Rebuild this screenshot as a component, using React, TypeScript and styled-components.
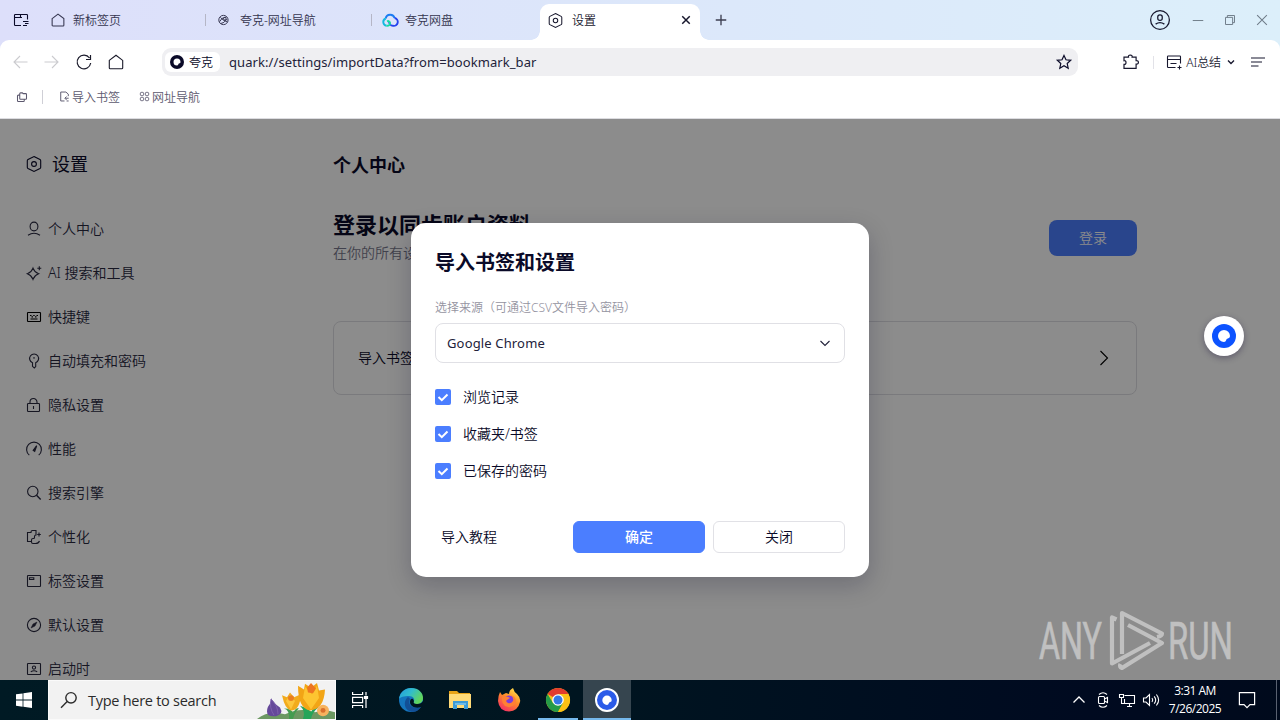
import React from 'react'
import styled, { createGlobalStyle } from 'styled-components'

const ui = `"Noto Sans", "Noto Sans CJK SC", sans-serif`
const ink = '#0a0a28'

const GlobalStyles = createGlobalStyle`
  * {
    box-sizing: border-box;
  }
  body {
    margin: 0;
    overflow: hidden;
    font-family: ${ui};
    font-weight: 350;
    color: ${ink};
  }
  button {
    font-family: inherit;
    font-weight: inherit;
    color: inherit;
    padding: 0;
    border: 0;
    background: none;
  }
  svg {
    display: block;
    flex: none;
  }
`

/* ---------- icons ---------- */

const Svg = styled.svg<{ $size?: number; $weight?: number }>`
  width: ${p => p.$size || 16}px;
  height: ${p => p.$size || 16}px;
  fill: none;
  stroke: currentColor;
  stroke-width: ${p => p.$weight || 1.1};
  overflow: visible;
`

type IconProps = { size?: number; weight?: number; children?: React.ReactNode }

const Icon = ({ size, weight, children }: IconProps) => (
  <Svg viewBox="0 0 16 16" $size={size} $weight={weight}>
    {children}
  </Svg>
)

const HexIcon = ({ size, weight }: IconProps) => (
  <Icon size={size} weight={weight}>
    <path d="M8 .5 14 3.600Q14.700 4 14.700 4.800V11.200Q14.700 12 14 12.400L8 15.500 2 12.400Q1.300 12 1.300 11.200V4.800Q1.300 4 2 3.600Z" />
    <circle cx="8" cy="8" r="2.400" />
  </Icon>
)

const HomeIcon = ({ size, weight }: IconProps) => (
  <Icon size={size} weight={weight}>
    <path d="M1.300 6.400 8 1.200l6.700 5.200v7.500q0 .9-.9.9H2.200q-.9 0-.9-.9Z" />
  </Icon>
)

const QuarkMark = ({ size = 14, color = ink }: { size?: number; color?: string }) => (
  <Svg viewBox="0 0 24 24" $size={size}>
    <circle cx="12" cy="12" r="12" fill={color} stroke="none" />
    <path
      d="M12 6a6 6 0 1 0 0 12q1.800 0 2-1.400.2-2.200 2.400-2.400Q18 14 18 12A6 6 0 0 0 12 6Z"
      fill="#fff"
      stroke="none"
    />
  </Svg>
)

const sideIcons: Record<string, React.ReactNode> = {
  user: (
    <>
      <ellipse cx="8" cy="5.500" rx="3.900" ry="4.400" />
      <path d="M2 14.300q6-4 12 0" />
    </>
  ),
  sparkle: (
    <>
      <path d="M7 3.100Q8.500 7.200 12.600 8.700 8.500 10.200 7 14.300 5.500 10.200 1.400 8.700 5.500 7.200 7 3.100Z" />
      <path d="M13.300 1.200v4M11.300 3.200h4" />
    </>
  ),
  keyboard: (
    <>
      <rect x="1.500" y="3.500" width="13" height="9" rx=".6" stroke="#000" />
      <path d="M4 6.500h1.500M7.200 6.500h1.500M10.500 6.500H12M5.500 7.900H7M9 7.900h1.500M4.500 10h7" stroke="#000" />
    </>
  ),
  key: (
    <>
      <path d="M6.500 9.700A4.500 4.500 0 1 1 9.700 9.700V13.600L8.300 15 6.500 13.300Z" />
      <path d="M8 4v1.800" />
    </>
  ),
  lock: (
    <>
      <rect x="1.500" y="6.500" width="12" height="8" rx=".8" />
      <path d="M4 6.500V5a3.500 3.500 0 0 1 7 0v1.500M7.500 9v3" />
    </>
  ),
  gauge: (
    <>
      <path d="M3.300 14.200A7.400 7.400 0 1 1 12.700 14.200" />
      <path d="m10.700 4.700-3.500 4.600 1.500 1Z" fill="currentColor" />
    </>
  ),
  search: (
    <>
      <circle cx="6.800" cy="6.500" r="5.200" />
      <path d="m10.500 10.300 4.200 4.200" strokeWidth="1.400" />
    </>
  ),
  theme: (
    <>
      <path d="M5.500 12.500h-4v-9h3.500V3q0-1.500 1.500-1.500h3.500v4.500q-1.500 0-1.500 1.500v1q0 1-1 1H7q-1.500 0-1.500 1.500v2q0 1.500 1.500 1.500h2.500q3 0 4-2.500" />
      <path d="M13 3.500v4M11.200 5.500h3.600" />
    </>
  ),
  tab: (
    <>
      <rect x="1.500" y="2.500" width="13" height="11" rx=".6" />
      <path d="M3.500 4.700h4.300v1.800H3.500z" />
    </>
  ),
  compass: (
    <>
      <circle cx="8" cy="8" r="6.600" />
      <path d="m11 5-2 4-4 2 2-4Z" fill="currentColor" strokeWidth=".5" />
    </>
  ),
  startup: (
    <>
      <rect x="1.500" y="2.500" width="13" height="11" rx=".6" />
      <circle cx="8" cy="6.600" r="1.600" />
      <path d="M4.800 10.800q3.200-2 6.400 0" />
    </>
  )
}

const CloudIcon = () => (
  <Svg viewBox="0 0 16 16" $size={16} $weight={1.9}>
    <path d="M3.700 6.500A4.600 4.600 0 0 1 12.600 6" stroke="#1c7cf2" />
    <path d="M12.600 6A3.900 3.900 0 0 1 11 13.800Q7.500 13.600 7 9.500" stroke="#2444ee" />
    <path d="M3.700 6.500A3.800 3.800 0 0 0 4.500 13.800" stroke="#14b9dd" />
    <path d="M4.500 13.800Q8.300 14 8 10.800 7.300 8.400 5 9.300" stroke="#16dca0" />
  </Svg>
)

/* ---------- browser chrome ---------- */

const Screen = styled.div`
  width: 1280px;
  height: 720px;
  display: flex;
  flex-direction: column;
  overflow: hidden;
`

// keeps CJK text optically centred next to its icon
const Label = styled.span`
  padding-bottom: 2px;
`

const ChromeTop = styled.header`
  background: linear-gradient(90deg, #dddffa 0%, #dce6fa 45%, #dceffa 100%);
`

const TabStrip = styled.div`
  height: 40px;
  display: flex;
  align-items: center;
  padding-right: 12px;
`

const TabsButton = styled.button`
  width: 41px;
  padding-left: 13px;
`

const Tab = styled.div<{ $width: number; $gap?: number }>`
  width: ${p => p.$width}px;
  height: 24px;
  display: flex;
  align-items: center;
  gap: ${p => p.$gap || 9}px;
  padding-left: 10px;
  font-size: 12px;
  color: #34344e;
`

const TabRule = styled.i`
  width: 1px;
  height: 12px;
  background: #b5b6c6;
`

const ActiveTab = styled.div`
  position: relative;
  align-self: flex-end;
  width: 160px;
  height: 36px;
  display: flex;
  align-items: center;
  padding: 0 9px 4px 8px;
  border-radius: 9px 9px 0 0;
  background: #fff;
  font-size: 12px;
  color: #16162c;

  &::before,
  &::after {
    content: '';
    position: absolute;
    bottom: 0;
    width: 9px;
    height: 9px;
  }
  &::before {
    left: -9px;
    background: radial-gradient(circle at 0 0, transparent 8.5px, #fff 9px);
  }
  &::after {
    right: -9px;
    background: radial-gradient(circle at 100% 0, transparent 8.5px, #fff 9px);
  }
  span {
    flex: 1;
    padding-left: 9px;
  }
`

const NewTab = styled.button`
  margin-left: 15px;
  color: #3c3e50;
`

const WindowControls = styled.div`
  margin-left: auto;
  display: flex;
  align-items: center;
  gap: 20px;
  color: #6f7c89;
`

const Profile = styled.div`
  color: #17172e;
  margin-right: 2px;
`

const Toolbar = styled.div`
  height: 44px;
  display: flex;
  align-items: center;
  padding: 0 14px 0 12px;
  background: #fff;
  border-radius: 9px 9px 0 0;
`

const NavButtons = styled.nav`
  width: 150px;
  display: flex;
  gap: 16px;
`

const NavButton = styled.button<{ $disabled?: boolean }>`
  color: ${p => (p.$disabled ? '#cbcbcf' : '#1a1a2a')};
`

const Omnibox = styled.div`
  width: 916px;
  height: 28px;
  display: flex;
  align-items: center;
  padding: 0 6px 0 3px;
  border-radius: 9px;
  background: #efeff2;
`

const SiteChip = styled.div`
  width: 55px;
  height: 20px;
  display: flex;
  align-items: center;
  gap: 5px;
  padding-left: 5px;
  border-radius: 6px;
  background: #fff;
  font-size: 12px;
`

const Url = styled.span`
  flex: 1;
  padding-left: 9px;
  font-size: 13px;
  font-weight: 400;
  letter-spacing: 0.08px;
  color: #22223a;
`

const Actions = styled.div`
  margin-left: auto;
  display: flex;
  align-items: center;
  color: #17172e;
`

const ToolRule = styled.i`
  width: 1px;
  height: 13px;
  margin: 0 12px 0 14px;
  background: #e2e2e8;
`

const Summary = styled.button`
  display: flex;
  align-items: center;
  gap: 4px;
  margin-right: 13px;
  font-size: 12px;
  letter-spacing: -0.1px;
`

const BookmarkBar = styled.div`
  height: 35px;
  display: flex;
  align-items: center;
  padding: 0 16px 9px;
  background: #fff;
  border-bottom: 1px solid #dcdce0;
  font-size: 12px;
  color: #5c586e;
`

const BookmarkRule = styled.i`
  width: 1px;
  height: 14px;
  margin: 0 16px 0 14px;
  background: #cfcfd6;
`

const Bookmark = styled.a`
  display: flex;
  align-items: center;
  gap: 2px;
  margin-right: 19px;
`

/* ---------- settings page ---------- */

const Page = styled.div`
  position: relative;
  flex: 1;
  min-height: 0;
  display: flex;
  background: #fff;
`

const Sidebar = styled.aside`
  width: 333px;
  padding: 30px 0 0 26px;
`

const SidebarTitle = styled.h1`
  height: 30px;
  margin: 0 0 28px;
  display: flex;
  align-items: center;
  gap: 10px;
  font-size: 18px;
  font-weight: 400;
`

const SideItem = styled.div`
  height: 44px;
  display: flex;
  align-items: center;
  gap: 6px;
  font-size: 14px;
  color: #28283f;
`

const Main = styled.main`
  width: 804px;
  padding-top: 34px;
`

const Heading = styled.h2`
  margin: 0;
  font-size: 18px;
  line-height: 25px;
  font-weight: 700;
`

const Account = styled.section`
  height: 62px;
  margin-top: 32px;
  display: flex;
  justify-content: space-between;
`

const AccountTitle = styled.h3`
  margin: 0;
  font-size: 22px;
  line-height: 28px;
  font-weight: 700;
`

const AccountHint = styled.p`
  margin: 5px 0 0;
  font-size: 14px;
  line-height: 20px;
  color: #77778c;
`

const LoginButton = styled.button`
  width: 88px;
  height: 36px;
  margin-top: 10px;
  padding-bottom: 2px;
  border-radius: 8px;
  background: #4b7eff;
  color: #fff;
  font-size: 14px;
`

const Card = styled.div`
  height: 74px;
  margin-top: 49px;
  display: flex;
  align-items: center;
  justify-content: space-between;
  padding: 0 24px;
  border: 1px solid #dfdfe4;
  border-radius: 8px;
  font-size: 14px;
`

const Scrim = styled.div`
  position: absolute;
  inset: 0;
  display: flex;
  justify-content: center;
  align-items: flex-start;
  padding-top: 104px;
  background: rgba(0, 0, 0, 0.45);
`

const Dialog = styled.div`
  width: 458px;
  height: 354px;
  padding: 24px;
  border-radius: 15px;
  background: #fff;
  box-shadow: 0 8px 24px rgba(10, 10, 40, 0.22);
  font-size: 14px;
`

const DialogTitle = styled.h2`
  margin: 0;
  font-size: 20px;
  line-height: 32px;
  font-weight: 700;
`

const FieldLabel = styled.div`
  margin-top: 20px;
  font-size: 12px;
  line-height: 17px;
  color: #94939f;
`

const Select = styled.div`
  height: 40px;
  margin-top: 7px;
  display: flex;
  align-items: center;
  justify-content: space-between;
  padding: 0 11px;
  border: 1px solid #e0e0e5;
  border-radius: 8px;
  font-size: 13px;
  font-weight: 400;
  letter-spacing: 0.15px;
  color: #22223a;
`

const Options = styled.div`
  margin-top: 24px;
  display: grid;
  gap: 17px;
`

const Option = styled.label`
  height: 20px;
  display: flex;
  align-items: center;
  gap: 12px;
`

const Check = styled.span`
  width: 16px;
  height: 16px;
  border-radius: 2px;
  background: #4b7eff;
  color: #fff;
`

const Footer = styled.div`
  margin-top: 40px;
  display: flex;
  align-items: center;
  gap: 8px;
`

const Tutorial = styled.a`
  flex: 1;
  padding: 0 0 2px 6px;
`

const DialogButton = styled.button<{ $primary?: boolean }>`
  width: 132px;
  height: 32px;
  padding-bottom: 2px;
  border-radius: 6px;
  border: 1px solid ${p => (p.$primary ? '#4b7eff' : '#e1e1e6')};
  background: ${p => (p.$primary ? '#4b7eff' : '#fff')};
  color: ${p => (p.$primary ? '#fff' : ink)};
  font-size: 14px;
  font-weight: ${p => (p.$primary ? 500 : 350)};
`

const FloatingBall = styled.div`
  position: absolute;
  right: 36px;
  top: 197px;
  width: 40px;
  height: 40px;
  display: grid;
  place-items: center;
  border-radius: 50%;
  background: #fff;
  box-shadow: 0 2px 6px rgba(30, 20, 60, 0.4);
`

const Watermark = styled.svg`
  position: absolute;
  left: 1036px;
  top: 487px;
  width: 200px;
  height: 70px;
  overflow: visible;
  fill: none;
  stroke: #c0c0c0;

  text {
    fill: #c0c0c0;
    stroke-width: 0.7px;
    font-family: Roboto, sans-serif;
    font-weight: 400;
    font-size: 52px;
  }
`

/* ---------- windows taskbar ---------- */

const Taskbar = styled.footer`
  height: 40px;
  display: flex;
  background: linear-gradient(90deg, #001a24 0%, #001520 45%, #000a20 85%, #000a1c 100%);
  font-family: 'Open Sans', sans-serif;
  font-weight: 400;
  color: #fff;
`

const StartButton = styled.div`
  width: 48px;
  display: grid;
  place-items: center;
`

const SearchBox = styled.div`
  width: 288px;
  display: flex;
  align-items: center;
  padding-left: 12px;
  border: 1px solid #fafafa;
  background: #f2f2f2;
  color: #2b2b2b;
  font-size: 14.5px;

  span {
    flex: 1;
    padding-left: 11px;
    letter-spacing: -0.27px;
  }
`

const AppButton = styled.div<{ $active?: boolean; $running?: boolean; $offset?: number }>`
  width: 48px;
  margin-left: ${p => p.$offset ?? 1}px;
  display: grid;
  place-items: center;
  background: ${p =>
    p.$running || p.$active
      ? `linear-gradient(#76b9ed, #76b9ed) bottom / ${p.$active ? 48 : 40}px 2px no-repeat`
      : 'none'};
  background-color: ${p => (p.$active ? '#36454f' : 'transparent')};
`

const Tray = styled.div`
  margin-left: auto;
  display: flex;
  align-items: center;
  gap: 8px;
`

const Clock = styled.div`
  width: 56px;
  text-align: center;
  font-size: 12px;
  line-height: 18px;
  letter-spacing: -0.5px;
  white-space: nowrap;
`

const ShowDesktop = styled.i`
  width: 4px;
  height: 40px;
  margin-left: 5px;
  border-left: 1px solid #596170;
`

const FlowerArt = styled.svg`
  width: 78px;
  height: 38px;
  fill: none;
`

const Flowers = () => (
  <FlowerArt viewBox="0 -2 78 40" preserveAspectRatio="none">
    <path d="M0 38Q12 28 28 33 44 25 58 31 68 27 78 31V38Z" fill="#6c9862" />
    <path d="M32 38Q33 29 27 27 35 27 36 32 39 25 42 27 38 30 36 38Z" fill="#449c50" />
    <path d="M46 38Q49 30 43 24 52 27 54 31 57 24 62 25 55 31 54 38Z" fill="#26a55a" />
    <path d="M14 16Q16 21 23 26 27 33 19 35 10 36 10 30 10 25 14 21Z" fill="#65499a" />
    <path d="M14 17Q12 26 17 34M14 17Q21 24 21 33" stroke="#7c60ac" />
    <path d="M25 13 30 15 33 10 37 15 44 12Q43 29 34 29 28 28 25 13Z" fill="#f2ab1c" />
    <path d="M33 12 38 19 34 28 29 19Z" fill="#fdc63c" />
    <circle cx="34" cy="16" r="3" fill="#ea7f20" />
    <path d="M41 3 47 7 48 1 54 5 60 0 62 8 68 7Q67 28 53 29 41 27 41 3Z" fill="#f2a516" />
    <path d="M48 4 55 12 60 3 62 16 54 28 46 16Z" fill="#fdc531" />
    <path d="M50 5 54 0 59 6 56 11 51 10Z" fill="#ed7521" />
    <circle cx="66" cy="29" r="6" fill="#f7b25e" />
    <circle cx="66" cy="29" r="2.500" fill="#da702c" />
  </FlowerArt>
)

const EdgeLogo = () => (
  <Svg viewBox="0 0 24 24" $size={24}>
    <defs>
      <linearGradient id="edgeTop" x1="0" y1="0" x2="1" y2=".5">
        <stop offset="0" stopColor="#239bdc" />
        <stop offset=".5" stopColor="#31bccd" />
        <stop offset="1" stopColor="#62d65b" />
      </linearGradient>
    </defs>
    <g stroke="none">
      <circle cx="12" cy="12" r="12" fill="#1475be" />
      <path d="M0 11C1 4 6 0 12 0c8 0 12 5 12 10 0 4-3 6-6 6-4 0-4-1.500-3-3 1-2-1-5-5-5-5 0-9 1-10 3Z" fill="url(#edgeTop)" />
      <path d="M9 9C3 14 6 24 14 23.800c4 0 6-2 8-5-7 3-14-1-11-8Z" fill="#124f96" />
      <path d="M15 13c-1 2 0 3 3 3 3 0 5-1 6-3v5l-2 1c-6 2-11-1-11-5 0-2 1-4 3-3Z" fill="#001520" />
    </g>
  </Svg>
)

const FolderLogo = () => (
  <Svg viewBox="0 0 24 24" $size={24}>
    <g stroke="none">
      <path d="M1 3h8l2 2h11v6H1Z" fill="#e8a317" />
      <path d="M1 6h22v14H1Z" fill="#ffda77" />
      <path d="M5 13h15v8h-4v-4H9v4H5Z" fill="#3c9bd7" />
      <path d="M7 15h11v2H7Z" fill="#6dbbe8" />
    </g>
  </Svg>
)

const FirefoxLogo = () => (
  <Svg viewBox="0 0 24 24" $size={24}>
    <defs>
      <linearGradient id="fox" x1=".8" y1="0" x2=".2" y2="1">
        <stop offset="0" stopColor="#ffe34b" />
        <stop offset=".45" stopColor="#ff8b28" />
        <stop offset="1" stopColor="#f42a68" />
      </linearGradient>
    </defs>
    <g stroke="none">
      <path d="M3 4 5 7 9 5 12 6Q12 2 16 0 17 4 20 6 24 10 23 14 21 23 12 23.500 2 23 1 13 1 8 3 4Z" fill="url(#fox)" />
      <circle cx="12" cy="13" r="5.500" fill="#7c3bdc" />
      <path d="M5 9Q9 7 13 10L10 12Q8 13 11 15 14 16 16 13 17 10 14 7 21 10 18 16 14 21 8 18 4 14 5 9Z" fill="#ff8034" />
    </g>
  </Svg>
)

const ChromeLogo = () => (
  <Svg viewBox="0 0 24 24" $size={24}>
    <g stroke="none">
      <circle cx="12" cy="12" r="12" fill="#fbc116" />
      <path d="M12 12 1.600 6A12 12 0 0 1 22.400 6Z" fill="#e33b2e" />
      <path d="M1.600 6A12 12 0 0 0 12 24L17 15 7 15Z" fill="#259b48" />
      <path d="M12 6H22.400A12 12 0 0 1 12 24L17.200 15Z" fill="#fbc116" />
      <circle cx="12" cy="12" r="5.800" fill="#fff" />
      <circle cx="12" cy="12" r="4.500" fill="#3478e5" />
    </g>
  </Svg>
)

const sideItems = [
  ['user', '个人中心'],
  ['sparkle', 'AI 搜索和工具'],
  ['keyboard', '快捷键'],
  ['key', '自动填充和密码'],
  ['lock', '隐私设置'],
  ['gauge', '性能'],
  ['search', '搜索引擎'],
  ['theme', '个性化'],
  ['tab', '标签设置'],
  ['compass', '默认设置'],
  ['startup', '启动时']
]

const BrowserTop = () => (
  <ChromeTop>
    <TabStrip>
      <TabsButton>
        <Icon>
          <path d="M8 13.500H2.300q-.8 0-.8-.8V3.300q0-.8.8-.8h11.400q.8 0 .8.800v4.200M1.500 5.500h6v-3M7.500 5.500h1.500M10 9.500h5.500M12 11.500h3.500M10 13.500h4" />
        </Icon>
      </TabsButton>
      <Tab $width={164} $gap={8}>
        <HomeIcon size={14} weight={1.2} />
        新标签页
      </Tab>
      <TabRule />
      <Tab $width={165} $gap={10}>
        <Icon size={14}>
          <circle cx="8.500" cy="8" r="5.300" />
          <path d="M4 10Q6 5 12 4.500M5.500 12Q9 12 12.500 7M5 5Q8 9 13 10" />
          <circle cx="10" cy="6.500" r="1.500" />
        </Icon>
        夸克-网址导航
      </Tab>
      <TabRule />
      <Tab $width={168} $gap={7}>
        <CloudIcon />
        夸克网盘
      </Tab>
      <ActiveTab>
        <HexIcon size={15} />
        <span>设置</span>
        <Icon size={10} weight={2.3}>
          <path d="m2 2 12 12M14 2 2 14" />
        </Icon>
      </ActiveTab>
      <NewTab>
        <Icon size={12} weight={1.8}>
          <path d="M8 1v14M1 8h14" />
        </Icon>
      </NewTab>
      <WindowControls>
        <Profile>
          <Icon size={20} weight={1}>
            <circle cx="8" cy="8" r="7.500" />
            <rect x="6.200" y="3.800" width="3.600" height="4.500" rx="1.700" />
            <path d="M4.500 11.300q3.500-2.500 7 0" />
          </Icon>
        </Profile>
        <Icon size={12} weight={1.3}>
          <path d="M1 8.700h14" />
        </Icon>
        <Icon size={12} weight={1.3}>
          <path d="M2 4.500h9.500V14H2ZM4.500 4.500V2H14v9.500h-2.500" />
        </Icon>
        <Icon size={12} weight={1.4}>
          <path d="m1.500 1.500 13 13M14.500 1.500l-13 13" />
        </Icon>
      </WindowControls>
    </TabStrip>
    <Toolbar>
      <NavButtons>
        <NavButton $disabled>
          <Icon>
            <path d="M15.500 8H2M8 2 2 8l6 6" />
          </Icon>
        </NavButton>
        <NavButton $disabled>
          <Icon>
            <path d="M.5 8H14M8 2l6 6-6 6" />
          </Icon>
        </NavButton>
        <NavButton>
          <Icon weight={1.200}>
            <path d="M14.700 9A6.800 6.800 0 1 1 13.500 4M14.500 1v4.500H10" />
          </Icon>
        </NavButton>
        <NavButton>
          <HomeIcon size={16} weight={1.1} />
        </NavButton>
      </NavButtons>
      <Omnibox>
        <SiteChip>
          <QuarkMark />
          夸克
        </SiteChip>
        <Url>quark://settings/importData?from=bookmark_bar</Url>
        <Icon weight={1.2}>
          <path d="m8 1.400 2 4.400 4.700.5-3.500 3.200 1 4.700L8 11.800l-4.200 2.400 1-4.700-3.500-3.200 4.700-.5Z" />
        </Icon>
      </Omnibox>
      <Actions>
        <Icon weight={1.2}>
          <path d="M1 3.200h4.500q-.5-2 1.800-2.200 2.300.2 1.800 2.200h4v3.500q2.300-.2 2.300 1.700t-2.300 1.700v4.300H1v-4q2 .2 2-1.900T1 6.700Z" />
        </Icon>
        <ToolRule />
        <Summary>
          <Icon weight={1.1}>
            <path d="M9.500 13.500H2.200q-.7 0-.7-.7V2.700q0-.7.700-.7h11.600q.7 0 .7.700v6.800M1.500 5.500h13M4.500 9.500h6M13.500 11.500v4M11.500 13.500h4" />
          </Icon>
          AI总结
          <Icon size={12} weight={1.8}>
            <path d="m4 6 4 4 4-4" />
          </Icon>
        </Summary>
        <Icon weight={1.2}>
          <path d="M1 4h14M1 8h11M1 12h7.500" />
        </Icon>
      </Actions>
    </Toolbar>
    <BookmarkBar>
      <Icon size={12} weight={1.4}>
        <path d="M6 2.500h2.500l1 1H13q1 0 1 1V10q0 1-1 1H6q-1 0-1-1V3.500q0-1 1-1ZM5 5.500H3q-1 0-1 1V13q0 1 1 1h7q1 0 1-1v-2" />
      </Icon>
      <BookmarkRule />
      <Bookmark>
        <Icon size={11} weight={1.4}>
          <path d="M8 14.500H2.500v-13H10l3.500 3v3M9 10.500h5M11 8l-2.500 2.500L11 13M11 14.500h3" />
        </Icon>
        导入书签
      </Bookmark>
      <Bookmark>
        <Icon size={11} weight={1.4}>
          <rect x="2" y="2" width="4.700" height="4.700" rx="1.500" />
          <rect x="9.300" y="2" width="4.700" height="4.700" rx="1.500" />
          <rect x="2" y="9.300" width="4.700" height="4.700" rx="1.500" />
          <rect x="9.300" y="9.300" width="4.700" height="4.700" rx="1.500" />
        </Icon>
        网址导航
      </Bookmark>
    </BookmarkBar>
  </ChromeTop>
)

const ImportDialog = () => (
  <Dialog>
    <DialogTitle>导入书签和设置</DialogTitle>
    <FieldLabel>选择来源（可通过CSV文件导入密码）</FieldLabel>
    <Select>
      Google Chrome
      <Icon size={16} weight={1.1}>
        <path d="m3.500 6 4.500 4.500L12.500 6" />
      </Icon>
    </Select>
    <Options>
      {['浏览记录', '收藏夹/书签', '已保存的密码'].map(name => (
        <Option key={name}>
          <Check>
            <Icon weight={2}>
              <path d="m3.500 8 3.300 3.200 5.700-5.700" />
            </Icon>
          </Check>
          <Label>{name}</Label>
        </Option>
      ))}
    </Options>
    <Footer>
      <Tutorial>导入教程</Tutorial>
      <DialogButton $primary>确定</DialogButton>
      <DialogButton>关闭</DialogButton>
    </Footer>
  </Dialog>
)

const SettingsPage = () => (
  <Page>
    <Sidebar>
      <SidebarTitle>
        <HexIcon size={16} />
        <Label>设置</Label>
      </SidebarTitle>
      {sideItems.map(([icon, name]) => (
        <SideItem key={icon}>
          <Icon>{sideIcons[icon]}</Icon>
          <Label>{name}</Label>
        </SideItem>
      ))}
    </Sidebar>
    <Main>
      <Heading>个人中心</Heading>
      <Account>
        <div>
          <AccountTitle>登录以同步账户资料</AccountTitle>
          <AccountHint>在你的所有设备上同步</AccountHint>
        </div>
        <LoginButton>登录</LoginButton>
      </Account>
      <Card>
        <Label>导入书签和设置</Label>
        <Icon weight={1.1}>
          <path d="m4.500 1 7 7-7 7" stroke="#000" />
        </Icon>
      </Card>
    </Main>
    <Scrim>
      <ImportDialog />
    </Scrim>
    <FloatingBall>
      <QuarkMark size={24} color="#0d53ff" />
    </FloatingBall>
    <Watermark viewBox="0 0 200 70">
      <text x="3" y="53" textLength="63" lengthAdjust="spacingAndGlyphs">
        ANY
      </text>
      <text x="132" y="53" textLength="65" lengthAdjust="spacingAndGlyphs">
        RUN
      </text>
      <path
        d="M80.500 13.500 76 11.500V57.500L114 37M86 48V7L126 27.500Q126 30 121 31M92 19 126 37 86 62Q83 61 84.500 58"
        strokeWidth="4.200"
        strokeLinejoin="round"
      />
    </Watermark>
  </Page>
)

const WindowsTaskbar = () => (
  <Taskbar>
    <StartButton>
      <Icon>
        <path
          d="M0 2.300 6.600 1.400V7.600H0ZM7.400 1.300 16 0V7.600H7.400ZM0 8.400h6.600v6.300L0 13.700ZM7.400 8.400H16V16l-8.600-1.200Z"
          fill="#fff"
          stroke="none"
        />
      </Icon>
    </StartButton>
    <SearchBox>
      <Icon weight={1.4}>
        <circle cx="10" cy="5.800" r="5.200" />
        <path d="M6.200 9.600 0 15.800" />
      </Icon>
      <span>Type here to search</span>
      <Flowers />
    </SearchBox>
    <AppButton $offset={0}>
      <Icon weight={1.2}>
        <path d="M.6 0v2.500h10V0M.6 16v-2.500h10V16M.6 5.300h10v5.400H.6ZM14 0v3.500M14 7v9" />
        <path d="M12.500 4.500h3v2h-3z" fill="#fff" />
      </Icon>
    </AppButton>
    <AppButton $offset={3}>
      <EdgeLogo />
    </AppButton>
    <AppButton>
      <FolderLogo />
    </AppButton>
    <AppButton>
      <FirefoxLogo />
    </AppButton>
    <AppButton $running>
      <ChromeLogo />
    </AppButton>
    <AppButton $active>
      <Svg viewBox="0 0 24 24" $size={24}>
        <circle cx="12" cy="12" r="11" fill="#2b5be8" stroke="#fff" strokeWidth="2" />
        <path d="M12 7.500a4.700 4.700 0 1 0 0 9.400q1.500 0 1.700-1.300.2-1.500 1.600-1.700 1.400-.2 1.400-1.700A4.700 4.700 0 0 0 12 7.500Z" fill="#fff" stroke="none" />
      </Svg>
    </AppButton>
    <Tray>
      <Icon size={16} weight={1.3}>
        <path d="m2.500 10.500 5.500-5.500 5.500 5.500" />
      </Icon>
      <Icon size={16}>
        <rect x="3.500" y="4.500" width="6" height="7" rx="1" />
        <path d="m9.500 7 3-1.500v5l-3-1.500M4 2.500q4-3.500 8 0M4 13.500q4 3.500 8 0" />
      </Icon>
      <Icon size={16}>
        <path d="M5.500 3.500h10v8h-10V7M8 14.500h5M10.500 11.500v3M.5 2.500h4v3h-4ZM2.500 5.500v6h3" />
      </Icon>
      <Icon size={16}>
        <path d="M.5 6H3l3.500-3.500v11L3 10H.5ZM9 6q1.500 2 0 4M11.200 4.300q3 3.700 0 7.400M13.400 2.500q4.500 5.500 0 11" />
      </Icon>
      <Clock>
        3:31 AM
        <br />
        7/26/2025
      </Clock>
      <Icon size={32}>
        <path d="M4.200 4.300h7.600v6h-2.300L8 11.800 6.500 10.300H4.200Z" strokeWidth=".6" />
      </Icon>
      <ShowDesktop />
    </Tray>
  </Taskbar>
)

const App = () => (
  <Screen>
    <GlobalStyles />
    <BrowserTop />
    <SettingsPage />
    <WindowsTaskbar />
  </Screen>
)

export default App
